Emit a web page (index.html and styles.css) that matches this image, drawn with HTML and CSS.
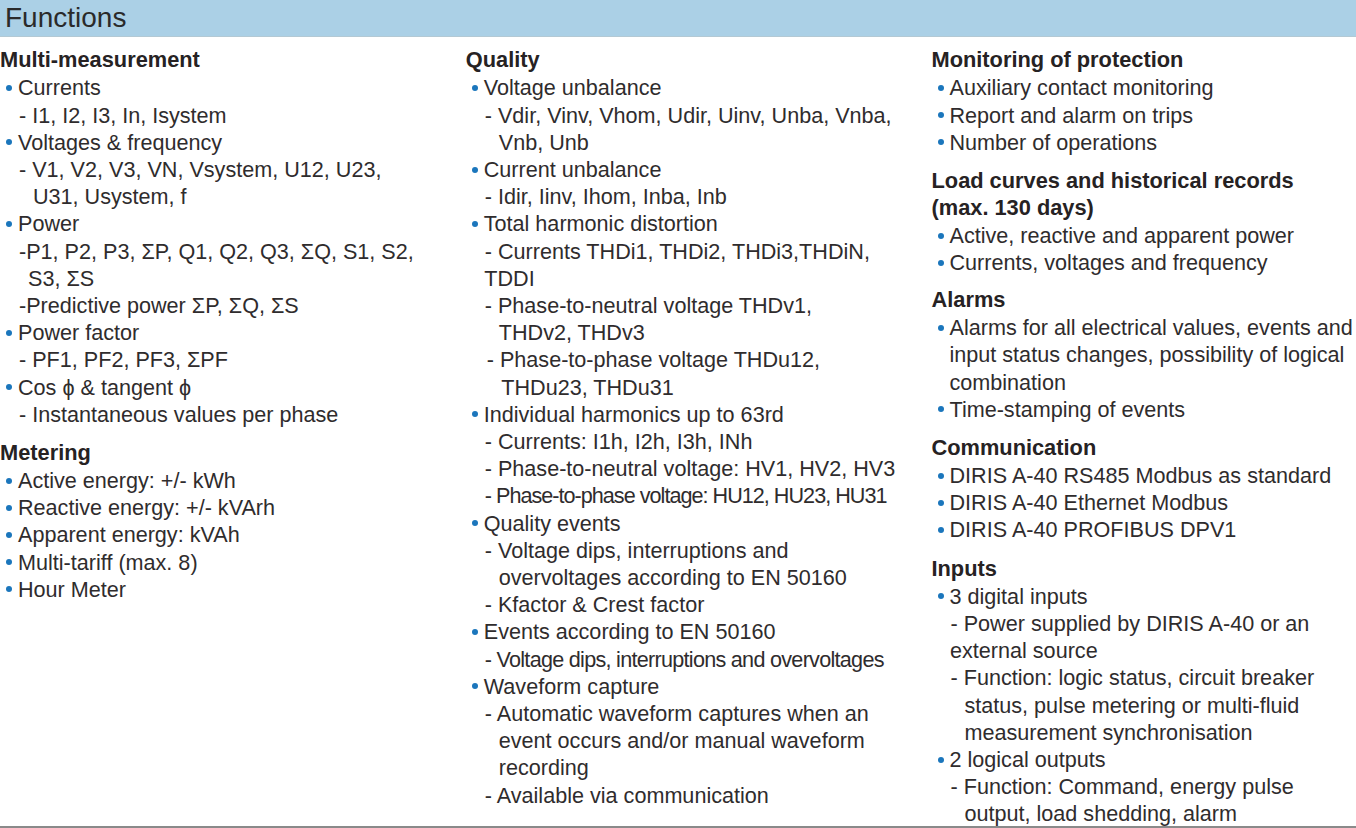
FILE: index.html
```html
<!DOCTYPE html>
<html lang="en">
<head>
<meta charset="utf-8">
<title>Functions</title>
<link rel="stylesheet" href="styles.css">
</head>
<body>
<div class="page">
  <header class="band"><h1 class="band-title">Functions</h1></header>
  <main class="cols">
    <section class="col">
      <h2 class="head">Multi-measurement</h2>
      <ul class="list">
        <li class="b">Currents</li>
        <li class="s">- I1, I2, I3, In, Isystem</li>
        <li class="b">Voltages &amp; frequency</li>
        <li class="s">- V1, V2, V3, VN, Vsystem, U12, U23,<br>U31, Usystem, f</li>
        <li class="b">Power</li>
        <li class="s2">-P1, P2, P3, ΣP, Q1, Q2, Q3, ΣQ, S1, S2,<br>S3, ΣS</li>
        <li class="s2">-Predictive power ΣP, ΣQ, ΣS</li>
        <li class="b">Power factor</li>
        <li class="s">- PF1, PF2, PF3, ΣPF</li>
        <li class="b">Cos ϕ &amp; tangent ϕ</li>
        <li class="s">- Instantaneous values per phase</li>
      </ul>
      <h2 class="head">Metering</h2>
      <ul class="list">
        <li class="b">Active energy: +/- kWh</li>
        <li class="b">Reactive energy: +/- kVArh</li>
        <li class="b">Apparent energy: kVAh</li>
        <li class="b">Multi-tariff (max. 8)</li>
        <li class="b">Hour Meter</li>
      </ul>
    </section>
    <section class="col">
      <h2 class="head">Quality</h2>
      <ul class="list">
        <li class="b">Voltage unbalance</li>
        <li class="s">- Vdir, Vinv, Vhom, Udir, Uinv, Unba, Vnba,<br>Vnb, Unb</li>
        <li class="b">Current unbalance</li>
        <li class="s">- Idir, Iinv, Ihom, Inba, Inb</li>
        <li class="b">Total harmonic distortion</li>
        <li class="s hang">- Currents THDi1, THDi2, THDi3,THDiN,<br>TDDI</li>
        <li class="s">- Phase-to-neutral voltage THDv1,<br>THDv2, THDv3</li>
        <li class="s shift">- Phase-to-phase voltage THDu12,<br>THDu23, THDu31</li>
        <li class="b">Individual harmonics up to 63rd</li>
        <li class="s">- Currents: I1h, I2h, I3h, INh</li>
        <li class="s">- Phase-to-neutral voltage: HV1, HV2, HV3</li>
        <li class="s tight">- Phase-to-phase voltage: HU12, HU23, HU31</li>
        <li class="b">Quality events</li>
        <li class="s">- Voltage dips, interruptions and<br>overvoltages according to EN 50160</li>
        <li class="s">- Kfactor &amp; Crest factor</li>
        <li class="b">Events according to EN 50160</li>
        <li class="s tight2">- Voltage dips, interruptions and overvoltages</li>
        <li class="b">Waveform capture</li>
        <li class="s">- Automatic waveform captures when an<br>event occurs and/or manual waveform<br>recording</li>
        <li class="s">- Available via communication</li>
      </ul>
    </section>
    <section class="col">
      <h2 class="head">Monitoring of protection</h2>
      <ul class="list">
        <li class="b">Auxiliary contact monitoring</li>
        <li class="b">Report and alarm on trips</li>
        <li class="b">Number of operations</li>
      </ul>
      <h2 class="head">Load curves and historical records<br>(max. 130 days)</h2>
      <ul class="list">
        <li class="b">Active, reactive and apparent power</li>
        <li class="b">Currents, voltages and frequency</li>
      </ul>
      <h2 class="head short">Alarms</h2>
      <ul class="list">
        <li class="b">Alarms for all electrical values, events and<br>input status changes, possibility of logical<br>combination</li>
        <li class="b">Time-stamping of events</li>
      </ul>
      <h2 class="head">Communication</h2>
      <ul class="list">
        <li class="b">DIRIS A-40 RS485 Modbus as standard</li>
        <li class="b">DIRIS A-40 Ethernet Modbus</li>
        <li class="b">DIRIS A-40 PROFIBUS DPV1</li>
      </ul>
      <h2 class="head">Inputs</h2>
      <ul class="list">
        <li class="b">3 digital inputs</li>
        <li class="s hang">- Power supplied by DIRIS A-40 or an<br>external source</li>
        <li class="s">- Function: logic status, circuit breaker<br>status, pulse metering or multi-fluid<br>measurement synchronisation</li>
        <li class="b">2 logical outputs</li>
        <li class="s">- Function: Command, energy pulse<br>output, load shedding, alarm</li>
      </ul>
    </section>
  </main>
  <div class="rule"></div>
</div>
</body>
</html>
```

FILE: styles.css
```css
* { box-sizing: border-box; }

html, body {
  margin: 0;
  padding: 0;
  background: #ffffff;
}

body {
  width: 1356px;
  height: 828px;
  overflow: hidden;
  font-family: "Liberation Sans", Arial, sans-serif;
  color: #2f2c2d;
}

.page {
  display: flex;
  flex-direction: column;
  height: 828px;
}

.band {
  flex: 0 0 37px;
  height: 37px;
  background: #abd0e6;
  border-bottom: 1px solid #b3c9d4;
  padding-left: 5px;
}

.band-title {
  margin: 0;
  font-size: 28px;
  font-weight: normal;
  line-height: 36px;
  color: #2a2a2a;
}

.cols {
  flex: 1 1 auto;
  min-height: 0;
  overflow: hidden;
  display: grid;
  grid-template-columns: 436px 436px 1fr;
  column-gap: 29.75px;
  padding-top: 9.3px;
  font-size: 21.6px;
  line-height: 27.2px;
}

.col {
  min-width: 0;
}

.head {
  margin: 11.1px 0 0.8px;
  font-size: 21.8px;
  line-height: 27.2px;
  font-weight: bold;
  color: #262223;
  white-space: nowrap;
}

.head:first-child {
  margin-top: 0;
}

.head.short {
  margin-top: 9.5px;
}

.list {
  list-style: none;
  margin: 0;
  padding: 0;
}

.list li {
  white-space: nowrap;
}

.b {
  padding-left: 18px;
  text-indent: -12px;
}

.b::before {
  content: "";
  display: inline-block;
  width: 6px;
  height: 6px;
  margin-right: 6px;
  border-radius: 50%;
  background: #1b76bc;
  vertical-align: 4.4px;
}

.s {
  padding-left: 33px;
  text-indent: -14px;
}

.s2 {
  padding-left: 28px;
  text-indent: -9px;
}

.s.hang {
  padding-left: 18.5px;
  text-indent: 0.5px;
}

.s.shift {
  padding-left: 35.5px;
  text-indent: -14.5px;
}

.s.tight {
  letter-spacing: -0.98px;
}

.s.tight2 {
  letter-spacing: -0.72px;
}

.rule {
  flex: 0 0 2px;
  height: 2px;
  background: #8a8a8a;
}
```
